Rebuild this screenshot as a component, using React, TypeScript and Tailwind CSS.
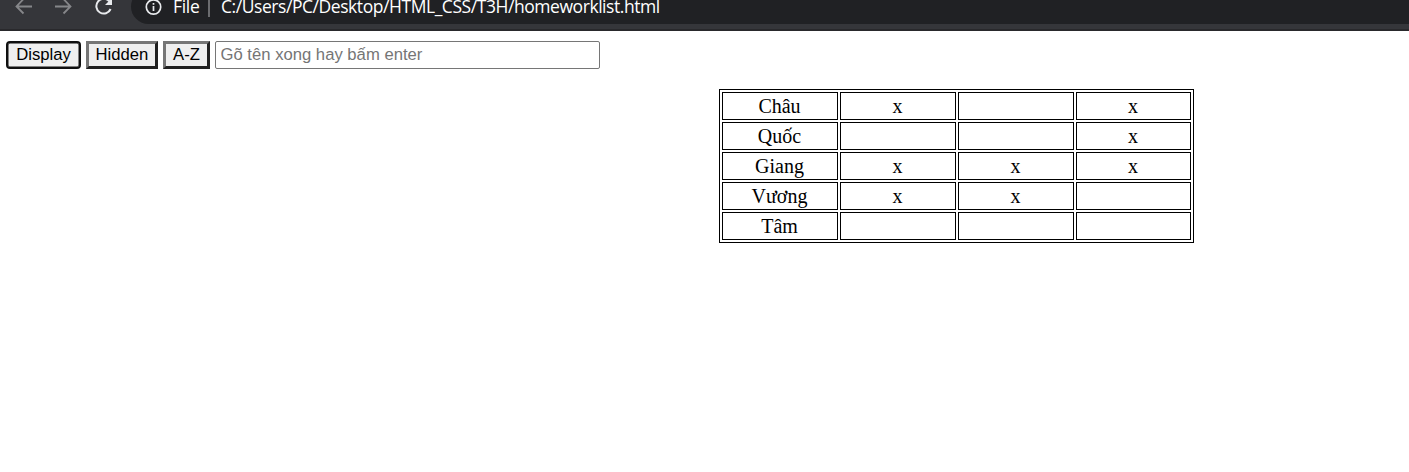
const rows = [
  { name: "Châu", marks: ["x", "", "x"] },
  { name: "Quốc", marks: ["", "", "x"] },
  { name: "Giang", marks: ["x", "x", "x"] },
  { name: "Vương", marks: ["x", "x", ""] },
  { name: "Tâm", marks: ["", "", ""] },
];

function BrowserBar() {
  return (
    <header className="flex h-[31px] items-start overflow-hidden border-b-2 border-[#29292c] bg-[#35363a] font-['Open_Sans','Noto_Sans',sans-serif] text-white">
      <svg className="h-[24px] w-[131px] shrink-0" viewBox="0 0 131 24" fill="none">
        <g stroke="#86878a" strokeWidth="1.8">
          <path d="M32 6.5H17M23.5 -1L16.5 6.5L23.5 13.5" />
          <path d="M55 6.5H70M63.5 -1L70.5 6.5L63.5 13.5" />
        </g>
        <path d="M109.4 1.4A7.4 7.4 0 1 0 110.6 9" stroke="#e8eaed" strokeWidth="2" />
        <path d="M112 -2V5H105Z" fill="#e8eaed" />
      </svg>
      <div className="-mt-[11px] flex h-[35px] grow items-center rounded-l-[17.5px] bg-[#202124] pl-[14px]">
        <svg className="h-[18px] w-[18px] shrink-0" viewBox="0 0 18 18" fill="none">
          <circle cx="8.5" cy="9" r="7.2" stroke="#e8eaed" strokeWidth="1.7" />
          <path d="M8.5 8V13M8.5 5V6.7" stroke="#e8eaed" strokeWidth="1.7" />
        </svg>
        <span className="ml-[10px] w-[35px] whitespace-nowrap pb-px text-[17.5px] leading-[12px] tracking-[-0.3px]">File</span>
        <span className="h-[21px] w-[2px] bg-[#6b6c6f]" />
        <span className="ml-[11px] whitespace-nowrap pb-px text-[17.5px] leading-[12px] tracking-[-0.44px]">
          C:/Users/PC/Desktop/HTML_CSS/T3H/homeworklist.html
        </span>
      </div>
    </header>
  );
}

export default function App() {
  return (
    <div className="h-[472px] w-[1409px] overflow-hidden bg-white text-black">
      <BrowserBar />
      <main className="pt-[10px]">
        <div className="flex h-[28px] gap-[5px] pl-[6px] font-['Liberation_Sans',sans-serif] text-[16.67px] leading-[20px]">
          <button className="w-[75px] whitespace-nowrap rounded-[4px] border-2 border-[#101010] bg-[#efefef] shadow-[inset_0_0_0_0.5px_#101010]">Display</button>
          <button className="w-[72px] whitespace-nowrap border-3 border-t-[#767676] border-r-[#212121] border-b-[#212121] border-l-[#767676] bg-[#efefef]">Hidden</button>
          <button className="w-[47px] whitespace-nowrap border-3 border-t-[#767676] border-r-[#212121] border-b-[#212121] border-l-[#767676] bg-[#efefef]">A-Z</button>
          <input
            className="w-[385px] rounded-[2px] border border-[#767676] bg-white pl-[4.5px] outline-none placeholder:text-[#757575]"
            placeholder="Gõ tên xong hay bấm enter"
          />
        </div>
        <table className="mt-[20px] ml-[719px] w-[475px] table-fixed border-separate border-spacing-[2px] border border-black text-center font-['Liberation_Serif',serif] text-[20px] leading-[25px]">
          <colgroup>
            <col className="w-[116px]" />
            <col className="w-[116px]" />
            <col className="w-[116px]" />
            <col className="w-[115px]" />
          </colgroup>
          <tbody>
            {rows.map((row) => (
              <tr key={row.name}>
                <td className="h-[28px] border border-black p-0 pr-px">{row.name}</td>
                {row.marks.map((mark, i) => (
                  <td key={i} className="h-[28px] border border-black p-0 pr-px">{mark}</td>
                ))}
              </tr>
            ))}
          </tbody>
        </table>
      </main>
    </div>
  );
}
